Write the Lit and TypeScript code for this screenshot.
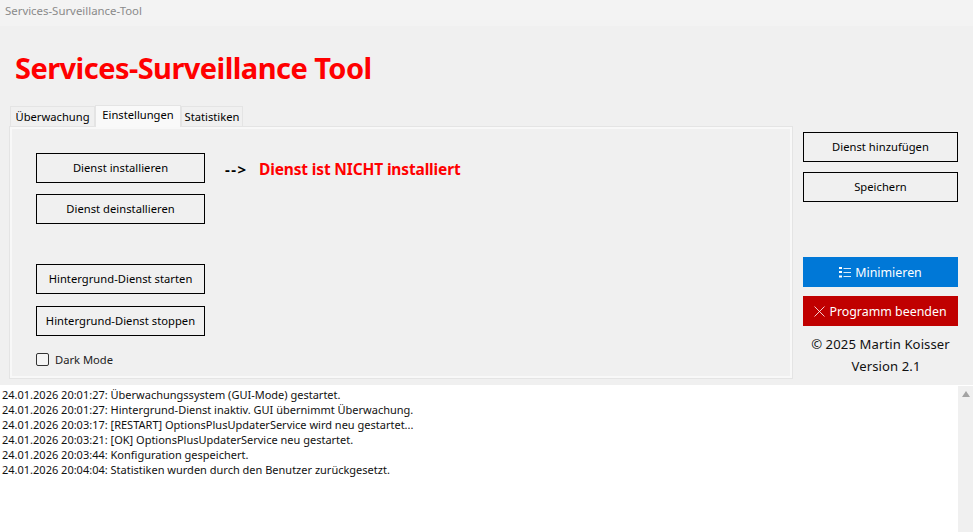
import { LitElement, html, css, svg } from "lit";
import { customElement } from "lit/decorators.js";

const LOG = [
  "24.01.2026 20:01:27: Überwachungssystem (GUI-Mode) gestartet.",
  "24.01.2026 20:01:27: Hintergrund-Dienst inaktiv. GUI übernimmt Überwachung.",
  "24.01.2026 20:03:17: [RESTART] OptionsPlusUpdaterService wird neu gestartet...",
  "24.01.2026 20:03:21: [OK] OptionsPlusUpdaterService neu gestartet.",
  "24.01.2026 20:03:44: Konfiguration gespeichert.",
  "24.01.2026 20:04:04: Statistiken wurden durch den Benutzer zurückgesetzt.",
];

const listIcon = svg`<svg class="ico" width="12" height="11" viewBox="0 0 12 11" fill="none">
  <rect x="0" y="0" width="3" height="2" fill="#fff"/><rect x="0" y="4" width="3" height="2" fill="#fff"/><rect x="0" y="8.5" width="3" height="2" fill="#fff"/>
  <path d="M4.5 1.5H12M4.5 5.5H12M4.5 9.5H12" stroke="#fff" stroke-width="1" opacity=".85"/></svg>`;
const xIcon = svg`<svg class="ico" width="11" height="11" viewBox="0 0 11 11" fill="none">
  <path d="M.5.5l10 10M10.5.5l-10 10" stroke="#fff" stroke-width=".9" opacity=".9"/></svg>`;

@customElement("app-root")
export class AppRoot extends LitElement {
  static styles = css`
    :host {
      display: flex; flex-direction: column; width: 973px; height: 532px; overflow: hidden;
      background: #f0f0f0; color: #000;
      font-family: "Noto Sans", "Open Sans", sans-serif; font-size: 11.2px;
    }
    .titlebar { height: 26px; flex: none; background: #f3f3f3; color: #8a8a8a; padding: 3px 0 0 5px; box-sizing: border-box; line-height: 15px; font-size: 11.4px; letter-spacing: 0; }
    .header { height: 79px; flex: none; box-sizing: border-box; padding: 22px 0 0 15px; }
    h1 { margin: 0; color: #f00; font-size: 29px; line-height: 40px; font-weight: 700; letter-spacing: -0.55px; }
    .main { display: flex; height: 274px; flex: none; }
    .left { width: 803px; flex: none; padding-left: 9px; box-sizing: border-box; }
    .tabs { display: flex; height: 21px; align-items: flex-end; padding-left: 1px; }
    .tab { box-sizing: border-box; height: 20px; border: 1px solid #e4e4e4; border-bottom: none; background: #f0f0f0; line-height: 19px; text-align: center; font-size: 11.2px; letter-spacing: 0; }
    .tab.active { height: 22px; line-height: 17px; background: #f9f9f9; position: relative; z-index: 1; margin-bottom: -1px; }
    .t1 { width: 85px; } .t2 { width: 86px; } .t3 { width: 62px; }
    .panel { box-sizing: border-box; width: 784px; height: 253px; border: 1px solid #e4e4e4; box-shadow: inset 0 0 0 2px #f8f8f8; padding: 26px 0 0 26px; display: flex; flex-direction: column; }
    .btn { box-sizing: border-box; border: 1px solid #000; background: #f0f0f0; display: flex; align-items: center; justify-content: center; font-size: 11.2px; letter-spacing: 0.03px; height: 30px; padding-bottom: 2px; white-space: nowrap; }
    .lb { width: 169px; }
    .row { display: flex; align-items: center; }
    .arrow { margin-left: 20px; margin-top: 2px; font-weight: 700; font-size: 15px; line-height: 20px; width: 34px; letter-spacing: 1.5px; }
    .status { color: #f00; margin-top: 2px; font-weight: 700; font-size: 15.5px; letter-spacing: -0.15px; }
    .g11 { margin-top: 11px; } .g40 { margin-top: 40px; } .g12 { margin-top: 12px; }
    .check { display: flex; align-items: center; margin-top: 15px; font-size: 11.2px; color: #222; height: 16px; }
    .box { width: 11px; height: 11px; border: 1px solid #333; border-radius: 2px; background: #f5f5f5; margin-right: 6px; }
    .right { width: 155px; flex: none; padding-top: 27px; display: flex; flex-direction: column; }
    .g10 { margin-top: 10px; }
    .blue, .red { border: none; color: #fff; font-size: 12.4px; letter-spacing: 0; gap: 4px; padding-bottom: 0; }
    .blue { background: #0078d7; margin-top: 55px; }
    .red { background: #c00000; margin-top: 9px; }
    .ico { flex: none; }
    .info { text-align: center; font-size: 13.1px; line-height: 22px; letter-spacing: 0.1px; margin-top: 7px; color: #111; }
    .ver { padding-left: 11px; }
    .log { flex: 1; display: flex; background: #fff; margin-top: 6px; }
    .lines { flex: 1; padding: 2px 0 0 2px; font-size: 11px; line-height: 15px; letter-spacing: 0; color: #111; }
    .scroll { width: 15px; flex: none; background: #f0f0f0; display: flex; justify-content: center; padding-top: 5px; margin-top: 1px; }
    .tri { width: 0; height: 0; border-left: 4px solid transparent; border-right: 4px solid transparent; border-bottom: 6px solid #a3a3a3; }
  `;

  render() {
    return html`
      <div class="titlebar">Services-Surveillance-Tool</div>
      <div class="header"><h1>Services-Surveillance Tool</h1></div>
      <div class="main">
        <div class="left">
          <div class="tabs">
            <div class="tab t1">Überwachung</div>
            <div class="tab active t2">Einstellungen</div>
            <div class="tab t3">Statistiken</div>
          </div>
          <div class="panel">
            <div class="row">
              <div class="btn lb">Dienst installieren</div>
              <div class="arrow">--&gt;</div>
              <div class="status">Dienst ist NICHT installiert</div>
            </div>
            <div class="btn lb g11">Dienst deinstallieren</div>
            <div class="btn lb g40">Hintergrund-Dienst starten</div>
            <div class="btn lb g12">Hintergrund-Dienst stoppen</div>
            <div class="check"><span class="box"></span>Dark Mode</div>
          </div>
        </div>
        <div class="right">
          <div class="btn">Dienst hinzufügen</div>
          <div class="btn g10">Speichern</div>
          <div class="btn blue">${listIcon}Minimieren</div>
          <div class="btn red">${xIcon}Programm beenden</div>
          <div class="info"><div>© 2025 Martin Koisser</div><div class="ver">Version 2.1</div></div>
        </div>
      </div>
      <div class="log">
        <div class="lines">${LOG.map((l) => html`<div>${l}</div>`)}</div>
        <div class="scroll"><div class="tri"></div></div>
      </div>
    `;
  }
}
